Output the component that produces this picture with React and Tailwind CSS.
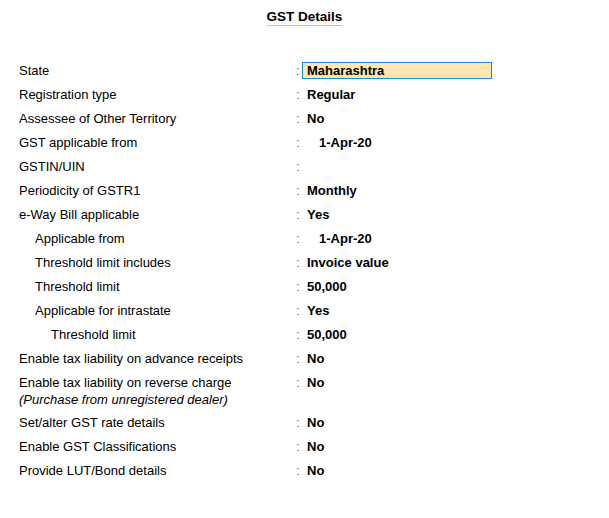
const rows = [
  { label: "State", value: "Maharashtra", field: true },
  { label: "Registration type", value: "Regular" },
  { label: "Assessee of Other Territory", value: "No" },
  { label: "GST applicable from", value: "1-Apr-20", date: true },
  { label: "GSTIN/UIN", value: "" },
  { label: "Periodicity of GSTR1", value: "Monthly" },
  { label: "e-Way Bill applicable", value: "Yes" },
  { label: "Applicable from", value: "1-Apr-20", date: true, level: 1 },
  { label: "Threshold limit includes", value: "Invoice value", level: 1 },
  { label: "Threshold limit", value: "50,000", level: 1 },
  { label: "Applicable for intrastate", value: "Yes", level: 1 },
  { label: "Threshold limit", value: "50,000", level: 2 },
  { label: "Enable tax liability on advance receipts", value: "No" },
  {
    label: "Enable tax liability on reverse charge",
    note: "(Purchase from unregistered dealer)",
    value: "No",
  },
  { label: "Set/alter GST rate details", value: "No" },
  { label: "Enable GST Classifications", value: "No" },
  { label: "Provide LUT/Bond details", value: "No" },
];

const indent = ["pl-0", "pl-[16px]", "pl-[32px]"];

function Row({ row }) {
  return (
    <div className="flex items-start text-[13px] leading-[24px] text-black">
      <div className={`w-[277px] ${indent[row.level || 0]}`}>
        <div>{row.label}</div>
        {row.note && (
          <div className="italic leading-[16px] -mt-[3px] pb-[3px]">{row.note}</div>
        )}
      </div>
      <div className="w-[6px] text-[#6e6450]">:</div>
      <div className="flex-1 font-bold">
        {row.field ? (
          <div className="mt-[3px] w-[190px] h-[17px] leading-[16px] border border-[#1e88d0] bg-[#fee7b3] pl-[4px]">
            {row.value}
          </div>
        ) : (
          <div className={row.date ? "pl-[17px]" : "pl-[5px]"}>{row.value}</div>
        )}
      </div>
    </div>
  );
}

export default function App() {
  return (
    <div
      className="min-h-screen bg-white pl-[19px]"
      style={{ fontFamily: '"Liberation Sans", Arial, sans-serif' }}
    >
      <div className="pt-[4px] h-[59px] pr-[19px] text-center">
        <span className="text-[13.5px] leading-[24px] font-bold text-black underline decoration-[#c0c0c0] underline-offset-[4px]">
          GST Details
        </span>
      </div>
      <div className="flex flex-col">
        {rows.map((row, i) => (
          <Row key={i} row={row} />
        ))}
      </div>
    </div>
  );
}
